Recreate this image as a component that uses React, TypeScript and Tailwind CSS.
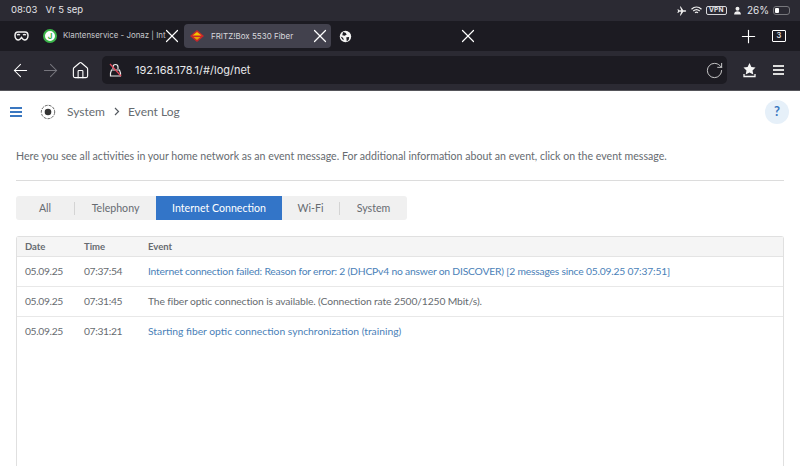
import { ArrowLeft, ArrowRight, Home, Plus, RotateCw, X } from "lucide-react";

const segments = ["All", "Telephony", "Internet Connection", "Wi-Fi", "System"];

const rows = [
  {
    date: "05.09.25",
    time: "07:37:54",
    text: "Internet connection failed: Reason for error: 2 (DHCPv4 no answer on DISCOVER) [2 messages since 05.09.25 07:37:51]",
    link: true,
    fit: "tracking-[-0.19px]",
  },
  {
    date: "05.09.25",
    time: "07:31:45",
    text: "The fiber optic connection is available. (Connection rate 2500/1250 Mbit/s).",
    link: false,
    fit: "tracking-[-0.12px]",
  },
  {
    date: "05.09.25",
    time: "07:31:21",
    text: "Starting fiber optic connection synchronization (training)",
    link: true,
    fit: "",
  },
];

function StatusBar() {
  return (
    <div className="flex h-[21px] items-center justify-between bg-[#2b2a33] pl-[11px] pr-[10px] text-[#e4e4e8] font-['Inter',sans-serif] text-[9.5px]">
      <div className="flex gap-[8px]">
        <span>08:03</span>
        <span>Vr 5 sep</span>
      </div>
      <div className="flex items-center gap-[3px]">
        <svg width="10" height="10" viewBox="0 0 24 24" fill="#eeeeee">
          <path d="M22 12c0-1-1-2-2.500-2H15L9 1H7l3 9H5L3 7.500H1L2.500 12 1 16.500h2L5 14h5l-3 9h2l6-9h4.500c1.500 0 2.500-1 2.500-2z" />
        </svg>
        <svg width="11" height="9" viewBox="0 0 22 16" fill="none" stroke="#eeeeee" strokeWidth="2.500" className="ml-[1px]">
          <path d="M1 5.500c6-5.500 14-5.500 20 0M4.500 9c4-3.500 9-3.500 13 0M8 12.500c2-1.500 4-1.500 6 0" />
        </svg>
        <span className="ml-[1px] rounded-[2px] border border-[#d8d8dc] px-[2px] text-[6.5px] font-bold leading-[7px] tracking-[0.3px]">VPN</span>
        <svg width="9" height="9" viewBox="0 0 16 16" fill="#eeeeee" className="ml-[3px]">
          <circle cx="8" cy="5" r="3.500" />
          <path d="M2 15c0-4 2.500-5.500 6-5.500s6 1.500 6 5.500z" />
        </svg>
        <span className="ml-[2px] text-[10px]">26%</span>
        <div className="relative ml-[1px] h-[9px] w-[17px] rounded-[3px] border border-[#77777c] p-[1px]">
          <div className="h-full w-[4px] rounded-[1px] bg-white" />
        </div>
      </div>
    </div>
  );
}

function TabBar() {
  return (
    <div className="flex h-[30px] items-center bg-[#1c1b22] font-['Inter',sans-serif] text-[#d6d6da]">
      <div className="flex w-[42px] justify-center pl-[1px]">
        <svg width="15" height="10" viewBox="0 0 30 20" fill="none" stroke="#f2f2f2" strokeWidth="3">
          <path d="M8 2h14c4 0 6 3 6 7 0 5-3 9-7 9-3 0-4-2-6-5-2 3-3 5-6 5-4 0-7-4-7-9 0-4 2-7 6-7z" />
          <path d="M6 8c2-1.500 4-1.500 6 0M18 8c2-1.500 4-1.500 6 0" />
        </svg>
      </div>
      <div className="flex w-[142px] items-center pl-[1px]">
        <div className="flex h-[14px] w-[14px] shrink-0 items-center justify-center rounded-full border-2 border-[#3bb54a] bg-white text-[8px] font-bold leading-none text-[#3bb54a]">
          J
        </div>
        <span className="ml-[6px] w-[98px] shrink-0 whitespace-nowrap text-[7.9px] text-[#c8c8cc]">
          Klantenservice - Jonaz | Int
        </span>
        <X size={22} strokeWidth={1.3} className="shrink-0 text-white" />
      </div>
      <div className="flex h-[24px] w-[147px] shrink-0 items-center rounded-[4px] bg-[#42414d]">
        <svg width="14" height="12" viewBox="0 0 14 12" className="ml-[6px] shrink-0">
          <path d="M7 0l7 6-7 6-7-6z" fill="#c8272b" />
          <path d="M7 2l4.500 3.500H2.500z" fill="#f5c400" />
          <path d="M7 10L3.500 7h7z" fill="#e8a200" />
        </svg>
        <span className="ml-[7px] whitespace-nowrap text-[8px] text-[#d8d8dc]">FRITZ!Box 5530 Fiber</span>
        <X size={22} strokeWidth={1.3} className="ml-auto shrink-0 text-white" />
      </div>
      <svg width="13" height="13" viewBox="0 0 16 16" className="ml-[8px] shrink-0">
        <circle cx="8" cy="8" r="7" fill="#f4f4f4" />
        <path d="M5 2.500l3 1 1.500 2-2.500 1.500-3-.5zM9 9l3.500-.5L12 12l-2.500 2z M2 8l3 1.500 1 3-2-1z" fill="#1c1b22" />
      </svg>
      <X size={22} strokeWidth={1.3} className="ml-[105px] shrink-0 text-white" />
      <Plus size={21} strokeWidth={1.3} className="ml-[259px] shrink-0 text-white" />
      <div className="ml-[13px] flex h-[12px] w-[14px] shrink-0 items-center justify-center rounded-[1px] border border-white text-[7.5px] font-semibold text-[#e0e0e0]">
        3
      </div>
    </div>
  );
}

function Toolbar() {
  return (
    <div className="flex h-[40px] items-center border-b border-[#55555a] bg-[#2b2a33] pb-[1px] text-white">
      <ArrowLeft size={21} strokeWidth={1.2} className="ml-[10px] shrink-0" />
      <ArrowRight size={21} strokeWidth={1.2} className="ml-[9px] shrink-0 text-[#77767e]" />
      <Home size={19} strokeWidth={1.4} className="ml-[10px] shrink-0" />
      <div className="ml-[12px] flex h-[28px] w-[625px] shrink-0 items-center rounded-[5px] bg-[#1c1b22] pr-[3px]">
        <svg width="13" height="14" viewBox="0 0 13 14" fill="none" className="ml-[7px] shrink-0">
          <path d="M4 6V4a2.500 2.500 0 0 1 5 0v2" stroke="#ececec" strokeWidth="1.200" />
          <path d="M2.500 7h8l1 3v3h-10v-3z" stroke="#ececec" strokeWidth="1.200" />
          <path d="M1 1l11 12" stroke="#e2475a" strokeWidth="1.200" />
        </svg>
        <span className="ml-[13px] font-['Inter',sans-serif] text-[11px] text-[#e8e8ea]">192.168.178.1/#/log/net</span>
        <RotateCw size={19} strokeWidth={1.1} className="ml-auto text-[#e0e0e0]" />
      </div>
      <svg width="13" height="15" viewBox="0 0 13 15" className="ml-[16px] shrink-0">
        <path d="M6.500 0l1.900 3.900 4.100.6-3 2.900.8 4.100-3.800-2-3.800 2 .8-4.100-3-2.900 4.100-.6z" fill="#f6f6f6" />
        <path d="M1 11v2.500h11V11" stroke="#f6f6f6" strokeWidth="1.300" fill="none" />
      </svg>
      <div className="ml-[17px] flex w-[11px] shrink-0 flex-col gap-[2px]">
        <div className="h-[2px] bg-[#dcdcdc]" />
        <div className="h-[2px] bg-[#dcdcdc]" />
        <div className="h-[2px] bg-[#dcdcdc]" />
      </div>
    </div>
  );
}

function PageHeader() {
  return (
    <div className="flex h-[41px] items-center pl-[10px] pr-[11px] text-[12px] text-[#666b70]">
      <div className="flex w-[12px] flex-col gap-[2px]">
        <div className="h-[2px] bg-[#3a77c0]" />
        <div className="h-[2px] bg-[#3a77c0]" />
        <div className="h-[2px] bg-[#3a77c0]" />
      </div>
      <svg width="16" height="16" viewBox="0 0 16 16" fill="none" className="ml-[18px]">
        <circle cx="8" cy="8" r="6.700" stroke="#6a6a6a" strokeWidth="1" strokeDasharray="3 1" />
        <circle cx="8" cy="8" r="3.300" fill="#333333" />
      </svg>
      <span className="ml-[11px]">System</span>
      <svg width="6" height="9" viewBox="0 0 6 9" fill="none" className="ml-[9px]">
        <path d="M1 1l3.500 3.500L1 8" stroke="#555a60" strokeWidth="1.200" />
      </svg>
      <span className="ml-[8px]">Event Log</span>
      <div className="ml-auto flex h-[24px] w-[24px] items-center justify-center rounded-full bg-[#e6f0f9] text-[13px] font-bold text-[#3a77c0]">
        ?
      </div>
    </div>
  );
}

function Segments() {
  return (
    <div className="mt-[15px] flex h-[24px] w-[391px] items-center rounded-[3px] bg-[#f0f0f0] text-[10.6px] text-[#666b70]">
      {segments.map((label, i) => {
        if (label === "Internet Connection") {
          return (
            <div key={label} className="flex h-full w-[126px] items-center justify-center bg-[#3375c8] pt-[1px] text-white">
              {label}
            </div>
          );
        }
        const widths = ["w-[59px]", "w-[81px]", "", "w-[58px]", "w-[67px]"];
        const divider = i === 0 || i === 3;
        return (
          <div key={label} className={`flex h-[13px] items-center justify-center pt-[1px] ${widths[i]} ${divider ? "border-r border-[#d4d4d4]" : ""}`}>
            {label}
          </div>
        );
      })}
    </div>
  );
}

function EventTable() {
  return (
    <div className="mt-[16px] rounded-t-[3px] border-x border-t border-[#e0e0e0] text-[10.3px] text-[#666b70]">
      <div className="flex h-[20px] items-center border-b border-[#e4e4e4] bg-[#f5f5f5] px-[8px] pt-[1px] text-[9.5px] font-bold">
        <span className="w-[59px]">Date</span>
        <span className="w-[64px]">Time</span>
        <span>Event</span>
      </div>
      {rows.map((row, i) => (
        <div key={row.time} className={`flex h-[30px] items-center px-[8px] ${i < 2 ? "border-b border-[#e8e8e8]" : ""}`}>
          <span className="w-[59px] tracking-[-0.35px]">{row.date}</span>
          <span className="w-[64px] tracking-[-0.35px]">{row.time}</span>
          <span className={`${row.fit} ${row.link ? "text-[#4a7fb8]" : ""}`}>{row.text}</span>
        </div>
      ))}
      <div className="h-[120px]" />
    </div>
  );
}

export default function App() {
  return (
    <div className="h-[466px] w-[800px] overflow-hidden bg-white font-['Lato',sans-serif]">
      <StatusBar />
      <TabBar />
      <Toolbar />
      <PageHeader />
      <div className="px-[16px]">
        <p className="mt-[16px] h-[16px] text-[10.6px] leading-[16px] text-[#666b70]">
          Here you see all activities in your home network as an event message. For additional information about an event, click on the event message.
        </p>
        <div className="mt-[16px] h-px bg-[#dcdcdc]" />
        <Segments />
        <EventTable />
      </div>
    </div>
  );
}
